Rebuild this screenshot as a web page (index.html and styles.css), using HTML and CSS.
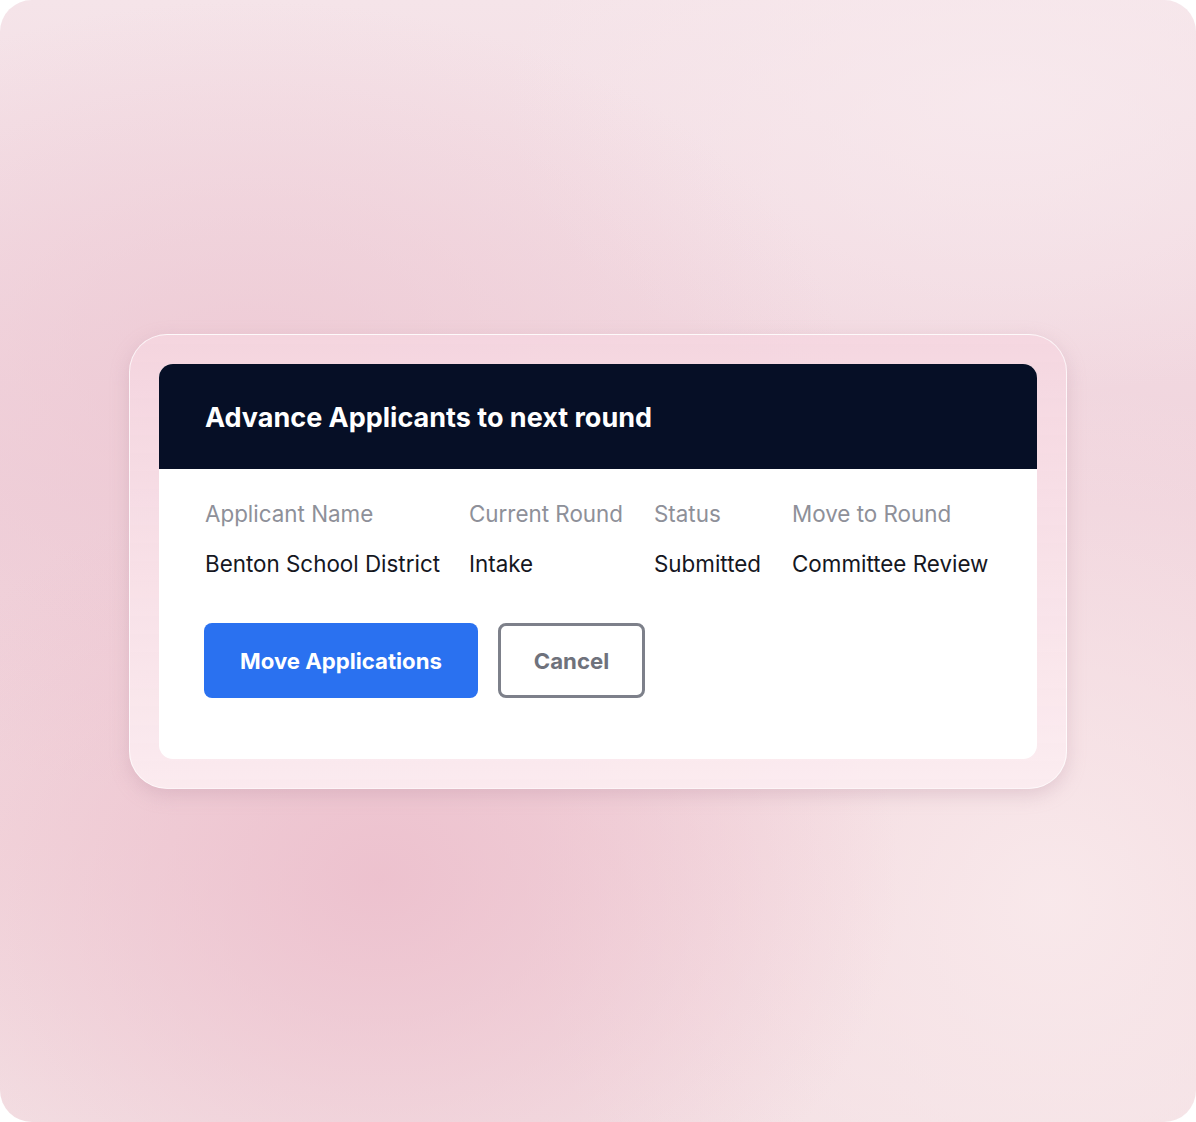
FILE: index.html
```html
<!DOCTYPE html>
<html lang="en">
<head>
<meta charset="utf-8">
<title>Advance Applicants</title>
<link rel="stylesheet" href="styles.css">
</head>
<body>
<div class="stage">
  <div class="frame">
    <div class="card">
      <div class="card-head">
        <h1 class="title">Advance Applicants to next round</h1>
      </div>
      <div class="card-body">
        <div class="grid">
          <div class="th">Applicant Name</div>
          <div class="th">Current Round</div>
          <div class="th">Status</div>
          <div class="th">Move to Round</div>
          <div class="td">Benton School District</div>
          <div class="td">Intake</div>
          <div class="td">Submitted</div>
          <div class="td">Committee Review</div>
        </div>
        <div class="actions">
          <button class="btn btn-primary">Move Applications</button>
          <button class="btn btn-outline">Cancel</button>
        </div>
      </div>
    </div>
  </div>
</div>
</body>
</html>
```

FILE: styles.css
```css
* { box-sizing: border-box; }
html, body { margin: 0; padding: 0; background: #ffffff; }
body { font-family: Inter, "Noto Sans", "Liberation Sans", sans-serif; }

.stage {
  width: 1196px;
  height: 1122px;
  border-radius: 32px;
  overflow: hidden;
  display: flex;
  align-items: center;
  justify-content: center;
  background:
    radial-gradient(ellipse 520px 420px at 380px 880px, rgba(236,190,204,0.85), rgba(236,190,204,0) 100%),
    radial-gradient(ellipse 600px 400px at 250px 400px, rgba(236,196,208,0.7), rgba(236,196,208,0) 100%),
    radial-gradient(ellipse 520px 520px at 1050px 900px, rgba(249,234,236,0.9), rgba(249,234,236,0) 100%),
    radial-gradient(ellipse 500px 300px at 1000px 100px, rgba(248,234,238,0.8), rgba(248,234,238,0) 100%),
    linear-gradient(180deg, #f5e4e9 0%, #f0d3dc 45%, #f2d6dc 75%, #f3dfe3 100%);
}

.frame {
  width: 938px;
  padding: 29px;
  border-radius: 38px;
  background: linear-gradient(180deg, rgba(245,214,224,0.85) 0%, rgba(251,236,240,0.95) 100%);
  border: 1px solid rgba(255,255,255,0.75);
  box-shadow: 0 6px 18px rgba(190,150,165,0.35);
}

.card {
  border-radius: 14px;
  overflow: hidden;
  background: #ffffff;
}

.card-head {
  background: #060f26;
  height: 105px;
  display: flex;
  align-items: center;
  padding: 3px 46px 0 46px;
}

.title {
  margin: 0;
  color: #ffffff;
  font-size: 27px;
  font-weight: 700;
  letter-spacing: 0;
}

.card-body {
  padding: 30px 46px 61px 46px;
}

.grid {
  display: grid;
  grid-template-columns: 264px 185px 138px auto;
  row-gap: 20px;
}

.th {
  color: #8e9099;
  font-size: 22.4px;
  line-height: 30px;
}

.td {
  color: #15171f;
  font-size: 22.4px;
  line-height: 30px;
}

.actions {
  display: flex;
  gap: 20px;
  margin-top: 44px;
  margin-left: -1px;
}

.btn {
  height: 75px;
  border-radius: 8px;
  font-family: Inter, "Noto Sans", "Liberation Sans", sans-serif;
  font-size: 22.2px;
  font-weight: 700;
  cursor: pointer;
}

.btn-primary {
  width: 274px;
  background: #2a71f0;
  color: #ffffff;
  border: 0;
}

.btn-outline {
  width: 147px;
  background: #ffffff;
  color: #6f727c;
  border: 3px solid #7d808a;
}
```
